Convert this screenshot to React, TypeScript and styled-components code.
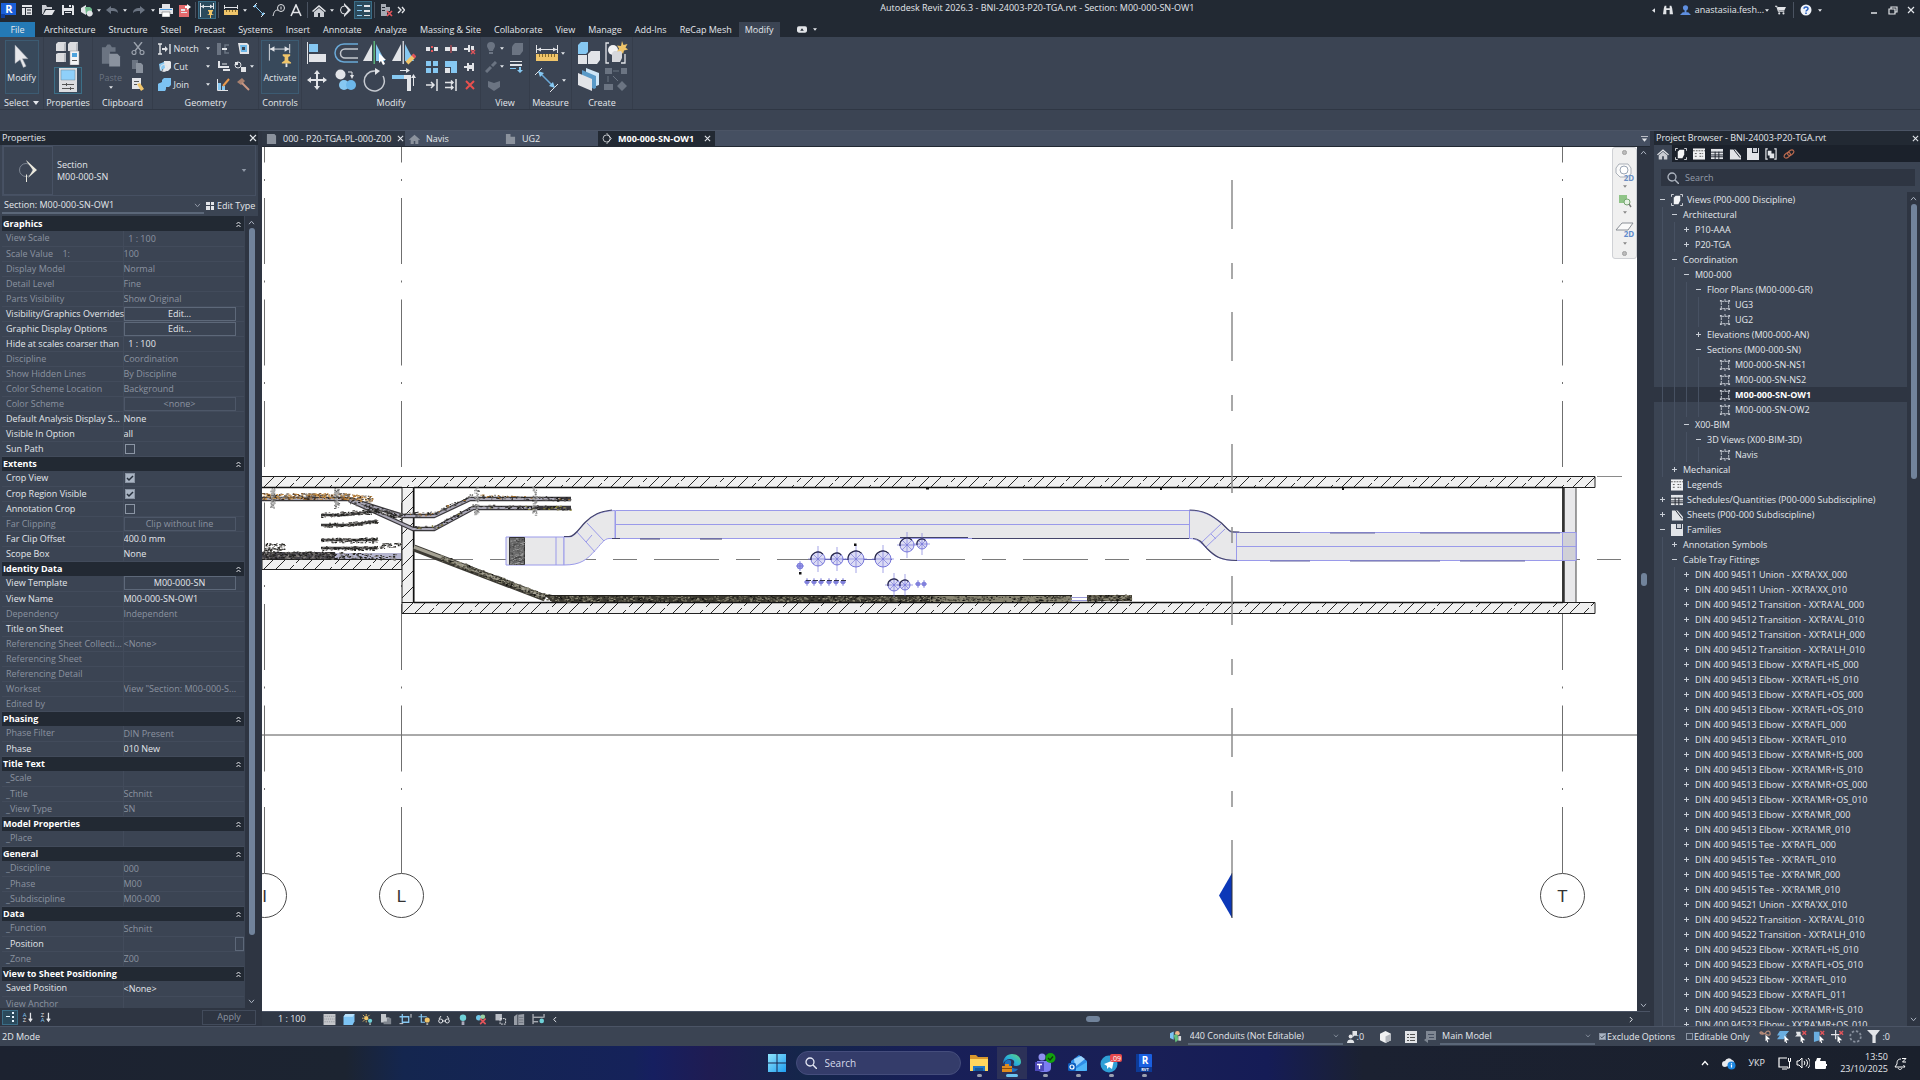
import React from "react";
import styled, { createGlobalStyle, css } from "styled-components";

/* ---------- theme values ---------- */
const c = {
  dark: "#222933",
  darker: "#1b212b",
  panel: "#3b4453",
  well: "#2e3542",
  tab: "#454f61",
  line: "#2f3744",
  text: "#e4e7ec",
  dim: "#8b93a0",
  blue: "#8fd0f5",
  thumb: "#71839b",
};

const GlobalStyle = createGlobalStyle`
  *, *::before, *::after { box-sizing: border-box; }
  body { margin: 0; background: ${c.panel}; overflow: hidden; }
  body, button, input, select { font: 9px/12px "Open Sans", "Noto Sans", sans-serif; color: ${c.text}; }
  button, select, input { margin: 0; padding: 0; border: 0; background: none; outline: 0; }
  svg { display: block; flex: none; }
`;

/* ---------- icons ---------- */
type Drawing = [string, React.ReactNode];
const W = "#e2e4e8";
const G = "#6b7482";
const Y = "#f0c56a";
const R = "#e2545a";
const B = "#86c8f2";
const S = { fill: "none", strokeWidth: 1 } as const;

const art: Record<string, Drawing> = {
  revit: ["0 0 17 17", <><path fill="#1a5fd8" d="M1 1h15v12H5v3H1z" /><path fill="#0f3f9e" d="M1 12h4v4H1z" /><text x="9" y="11" fontSize="11" fontWeight="700" fill="#fff" textAnchor="middle" fontFamily="Open Sans">R</text></>],
  appmenu: ["0 0 12 12", <><path fill={W} d="M1 1h10v2H1zM1 4h3v7H1zM5 4h6v7H5z" /><path stroke={c.dark} {...S} d="M6 6h4M6 9h4" /></>],
  open: ["0 0 14 12", <><path fill="#c9ccd2" d="M1 1h4l1 2h5v2H4L2 10H1z" /><path fill={W} d="M5 6h9l-3 5H2z" /></>],
  save: ["0 0 12 12", <><path fill={W} d="M0 1h11l1 1v9H0z" /><path fill={c.dark} d="M2 1h8v3H2zM2 7h8v4H2z" /><path fill={W} d="M3 8h6v1H3zM7 1h2v2H7z" /></>],
  sync: ["0 0 13 13", <><path fill={W} d="M1 4l5-3v10l-5-3z" /><path fill="#6fb98c" d="M5 3h5l2 2v5H6z" /><path fill={W} d="M8 7a3 3 0 110 5 3 3 0 010-5" /></>],
  undo: ["0 0 14 12", <path fill={G} d="M1 6l5-4v2c5 0 7 2 7 5-2-2-4-2-7-2v3z" />],
  redo: ["0 0 14 12", <path fill={G} d="M13 6L8 2v2C3 4 1 6 1 9c2-2 4-2 7-2v3z" />],
  print: ["0 0 14 13", <><path fill={W} d="M3 0h8v4H3zM0 4h14v6H0z" /><path fill="#4d9be0" d="M1 5h12v1H1z" /><path fill="#fff" stroke="#555" strokeWidth=".5" d="M3 8h8v5H3z" /></>],
  pdf: ["0 0 13 13", <><path fill="#e36a6d" d="M1 1h8l2 3v9H1z" /><path fill={W} d="M3 5h4v2H3zM3 8h6v1H3z" /><path fill="#fff" d="M9 0l4 3-4 3V4H7V2h2z" /></>],
  dimlock: ["0 0 16 16", <><path stroke={W} {...S} d="M1.500 1v14M14.500 1v6M2 4.500h12" /><path fill={W} d="M2 4.500l3-2v4zM14 4.500l-3-2v4z" /><path fill={Y} d="M9 8h5v1l-1 1v2l2 1H8l2-1v-2L9 9zM11 13h1v3h-1z" /></>],
  ruler: ["0 0 14 12", <><path fill={Y} d="M0 6h14v5H0z" /><path stroke="#8a6d2a" {...S} d="M2.500 6v2M5.500 6v2M8.500 6v2M11.500 6v2" /><path stroke={W} {...S} d="M.5 1v4M13.500 1v4M1 3.500h12" /></>],
  dim: ["0 0 14 14", <><path stroke={W} {...S} d="M1 4l4-4M9 14l4-4" /><path stroke={B} {...S} d="M3 3l8 8" /><path fill={B} d="M2 2h3L2 5zM12 12H9l3-3z" /></>],
  tag: ["0 0 13 13", <><circle cx="9" cy="4" r="3.500" stroke={W} {...S} /><path stroke={W} {...S} d="M6 6c-4 0-4 3-5 6M9 2.500v3" /></>],
  lettera: ["0 0 12 13", <path stroke={W} fill="none" strokeWidth="1.600" d="M1 12L6 1l5 11M3 8.500h6" />],
  house: ["0 0 14 13", <><path fill={W} d="M0 7l7-6 7 6-1 1-6-5-6 5z" /><path fill="#c9ccd2" d="M2 8l5-4 5 4v5H8V9H6v4H2z" /></>],
  houseg: ["0 0 14 13", <path fill="#8b929d" d="M0 7l7-6 7 6-1 1-1-1v6H8V9H6v4H2V7L1 8z" />],
  section: ["0 0 12 14", <><circle cx="5.500" cy="7" r="4" stroke={W} {...S} /><path fill={W} d="M5 0l7 7-7 7v-2l4-5-4-5z" /></>],
  thin: ["0 0 14 14", <><path stroke={B} {...S} d="M1 2.500h5M1 7.500h5M1 12.500h5" /><path stroke={W} strokeWidth="2" d="M8 3h6M8 8h6" /><path stroke={W} {...S} d="M8 12.500h6" /></>],
  closeviews: ["0 0 13 14", <><path fill="#a6abb4" d="M1 1h5v3h4v4H7v5H1z" /><path stroke={c.dark} {...S} d="M2 4.500h3M2 7.500h3" /><path stroke={R} strokeWidth="1.700" d="M7 8l5 5M12 8l-5 5" /></>],
  more: ["0 0 8 8", <path stroke={W} fill="none" strokeWidth="1.400" d="M1 1l3 3-3 3M5 1l2.500 3L5 7" />],
  caret: ["0 0 6 4", <path fill="currentColor" d="M0 0h6L3 4z" />],
  caretleft: ["0 0 4 6", <path fill={W} d="M4 0v6L0 3z" />],
  chev: ["0 0 8 6", <path stroke="currentColor" fill="none" strokeWidth="1.200" d="M1 1l3 3.500L7 1" />],
  chevup: ["0 0 8 6", <path stroke="currentColor" fill="none" strokeWidth="1.200" d="M1 5l3-3.500L7 5" />],
  chevleft: ["0 0 6 8", <path stroke="currentColor" fill="none" strokeWidth="1.200" d="M5 1L2 4l3 3" />],
  chevright: ["0 0 6 8", <path stroke="currentColor" fill="none" strokeWidth="1.200" d="M1 1l3 3-3 3" />],
  collapse: ["0 0 5 6", <path stroke={W} {...S} d="M.5 3l2-2 2 2M.5 6l2-2 2 2" />],
  close: ["0 0 8 8", <path stroke="currentColor" fill="none" strokeWidth="1.200" d="M1 1l6 6M7 1L1 7" />],
  min: ["0 0 8 8", <path stroke={W} strokeWidth="1.500" d="M1 7h6" />],
  restore: ["0 0 10 9", <path stroke={W} fill="none" strokeWidth="1.200" d="M3 3V1h6v5H7M1 3h6v5H1z" />],
  binoc: ["0 0 12 12", <path fill={W} d="M1 4l1-3h2v3h4V1h2l1 3 1 7H8V6H4v5H0z" />],
  user: ["0 0 12 12", <><circle cx="6" cy="3" r="2.800" fill="#5f8fe0" /><path fill="#5f8fe0" d="M5 5h2v3h2l3 3H0l3-3h2z" /></>],
  cart: ["0 0 13 11", <><path stroke={W} fill="none" strokeWidth="1.300" d="M0 1h2l2 6h7" /><path fill={W} d="M3 2h10l-2 4H4z" /><circle cx="5" cy="9.500" r="1.200" fill={W} /><circle cx="10" cy="9.500" r="1.200" fill={W} /></>],
  help: ["0 0 12 12", <><circle cx="6" cy="6" r="5.500" fill="#f0f3f8" /><path stroke="#2b62c0" fill="none" strokeWidth="1.500" d="M4 4.800c0-2.400 4-2.400 4 0 0 1.400-2 1.200-2 2.700" /><path fill="#2b62c0" d="M5.200 8.400h1.600V10H5.200z" /></>],
  camera: ["0 0 11 7", <><rect width="11" height="7" rx="2" fill={W} /><path fill={c.dark} d="M5.500 2l2 3h-4z" /></>],
  cursor: ["0 0 16 26", <path fill="#e6e7ea" stroke="#9aa0aa" strokeWidth=".5" d="M1 1l14 15H9l4 8-3 1.500L6.500 17 1 21z" />],
  blocks: ["0 0 26 24", <><path fill="#dcdde0" d="M1 3l2-2h8v9H1zM13 3l2-2h8v9H13zM1 13l2-1h8v9H1z" /><path fill="#b9bcc2" d="M9 3l2-2v9H9zM21 3l2-2v9h-2zM9 13l2-1v9H9z" /><path fill="#f3f4f6" stroke="#888" strokeWidth=".5" d="M15 10h9v14h-9z" /><path fill="#4fa3dc" d="M17 12h5v4h-5z" /><path fill="#555" d="M17 19h5v1h-5z" /></>],
  propsheet: ["0 0 18 24", <><path fill="#dcdde0" d="M0 0h18v24H0z" /><path fill="#8fd0fa" stroke="#6d8496" strokeWidth=".5" d="M2 2h14v10H2z" /><path stroke="#555" {...S} d="M3 16.500h12M3 20.500h12M7.500 15v3M11.500 19v3" /></>],
  paste: ["0 0 22 24", <><path fill={G} d="M1 3h4l2-3h3l2 3h4v5h-6v13H1z" /><path fill="#8a929e" d="M9 10h9l3 3v11H9z" /></>],
  cutter: ["0 0 14 13", <><path stroke="#9aa1ac" fill="none" strokeWidth="1.400" d="M3 0l7 9M11 0L4 9" /><circle cx="3" cy="10.500" r="2" stroke="#9aa1ac" fill="none" strokeWidth="1.200" /><circle cx="11" cy="10.500" r="2" stroke="#9aa1ac" fill="none" strokeWidth="1.200" /></>],
  copyg: ["0 0 12 13", <><path fill={G} d="M0 0h6v9H0z" /><path fill="#8a929e" d="M4 3h5l2 2v8H4z" /></>],
  match: ["0 0 13 13", <><path fill={W} d="M1 0h9v11H1z" /><path stroke="#555" {...S} d="M3 3.500h5M3 6.500h3" /><path fill={Y} d="M6 6l3-1 4 6-3 2z" /></>],
  notch: ["0 0 13 12", <><path stroke={W} fill="none" strokeWidth="1.400" d="M2 1v10M0 1h4M0 11h4M12 1v10" /><path fill={W} d="M4 5h3V3l3 3-3 3V7H4z" /></>],
  cutgeo: ["0 0 13 13", <><path fill="#e8e9ec" d="M6 1h6l1 1v6l-3 3H5z" /><path fill={B} d="M1 4l5-2 1 6-5 3z" /><circle cx="6" cy="8" r="3.500" fill="none" stroke={W} /></>],
  joingeo: ["0 0 13 13", <path fill="#7cc3f4" d="M4 2l2-2h7v7l-2 2H8a5 5 0 11-6-4l2-1z" />],
  cope: ["0 0 13 12", <><path fill={G} d="M0 0h4v12H0z" /><path stroke={G} fill="none" strokeWidth="1.500" d="M12 2H8v8h4" /><path fill={W} d="M5 5h5v2H5z" /></>],
  split: ["0 0 13 12", <><path fill={W} d="M1 0h9l2 2v9H3z" /><path fill="#6fb9ea" d="M3 2h7v7H4z" /><path fill={c.panel} d="M5 4h3v3H5z" /></>],
  wallj: ["0 0 13 12", <><path stroke={W} strokeWidth="2" fill="none" d="M2 0v6h10M6 9h7" /><path stroke={W} {...S} d="M5 3h5" /></>],
  paint: ["0 0 13 12", <><circle cx="4" cy="4" r="3" stroke={W} {...S} /><path fill={W} d="M7 6h5v5H7zM1 1h3v3H1z" /></>],
  demo: ["0 0 13 13", <><path fill={B} d="M1 5h3v7H1zM5 8h3v4H5z" /><path stroke="#ea9a4d" strokeWidth="2" d="M6 8l6-7" /><path stroke={W} {...S} d="M.5 1v11.500H11" /></>],
  hammer: ["0 0 13 13", <><path fill="#a8806f" d="M0 4l5-4 3 3-4 4z" /><path stroke="#c99784" strokeWidth="2" d="M5 5l7 7" /></>],
  activate: ["0 0 26 26", <><path stroke={W} {...S} d="M1.500 0v18M23.500 0v10M2 5.500h21" /><path fill={W} d="M2 5.500l5-3v6zM23 5.500l-5-3v6z" /><path fill={Y} d="M16 11h8v2l-2 1v4l3 2v1H15v-1l3-2v-4l-2-1z" /><path fill={W} d="M19 21h2v4h-2z" /></>],
  align: ["0 0 22 22", <><path fill={W} d="M1 0h1v22H1zM3 12h17v8H3z" /><path fill={B} d="M3 2h9v8H3z" /></>],
  offset: ["0 0 26 22", <><path stroke="#6aa9d8" fill="none" strokeWidth="1.500" d="M25 2H11a9 9 0 000 18h14" /><path stroke="#c3c7ce" fill="none" strokeWidth="1.500" d="M25 7H12a4 4 0 000 9h13" /></>],
  mirrorpick: ["0 0 24 24", <><path fill={W} d="M9 3v17H0z" /><path fill={B} d="M13 3v17h9z" /><path fill="#5bb37a" d="M10.500 0h1.500v23h-1.500z" /><path fill="#fff" d="M16 12l7 7h-3l2 4-2 1-2-4-2 2z" /></>],
  mirrordraw: ["0 0 24 24", <><path fill={W} d="M9 3v17H0z" /><path fill={B} d="M13 3v17h9z" /><path fill="#c9ccd2" d="M10.500 0h1.500v23h-1.500z" /><path stroke={Y} strokeWidth="4" d="M15 22l7-7" /><path stroke={R} strokeWidth="4" d="M21 16l2-2" /></>],
  move: ["0 0 20 20", <path fill={W} d="M10 0l3 4h-2v5h5V7l4 3-4 3v-2h-5v5h2l-3 4-3-4h2v-5H4v2L0 10l4-3v2h5V4H7z" />],
  copy: ["0 0 22 22", <><circle cx="5.500" cy="5.500" r="5" fill={W} /><circle cx="9" cy="16" r="5" fill={B} /><circle cx="16" cy="16" r="5" fill="#6cb7ea" /><path stroke={W} fill="none" d="M13 3h4v4" /><path fill={W} d="M15 6h4l-2 4z" /></>],
  rotate: ["0 0 24 24", <><path stroke="#c6cad1" fill="none" strokeWidth="1.500" d="M20 8a10 10 0 11-8-5" /><path fill={W} d="M12 0l5 3-5 4z" /></>],
  trim: ["0 0 24 24", <><path stroke={B} strokeWidth="4" d="M0 9h12" /><path stroke={W} fill="none" strokeWidth="4" d="M12 9h5v14" /><path stroke={W} {...S} d="M8 2.500h8M21.500 18V9" /><path fill={W} d="M14 0l4 2.500-4 2.500zM19 10l2.500-4 2.500 4z" /></>],
  splitel: ["0 0 12 10", <><path fill={W} d="M0 3h4v4H0zM8 3h4v4H8z" /><path fill={R} d="M5 2h2v2H5zM5 6h2v2H5z" /></>],
  splitgap: ["0 0 12 10", <><path fill={W} d="M0 3h5v4H0zM7 3h5v4H7z" /><path stroke={R} {...S} d="M6 1v8" /></>],
  unpin: ["0 0 12 12", <><path fill={W} d="M0 5h4V2h2v7H4V7H0zM7 3h3v4H7z" /><path stroke={R} strokeWidth="1.400" d="M7 7l4 4M11 7l-4 4" /></>],
  array: ["0 0 12 12", <path fill={B} d="M0 0h5v5H0zM7 0h5v5H7zM0 7h5v5H0zM7 7h5v5H7z" />],
  scale: ["0 0 12 12", <><path fill={B} d="M0 0h12v12H6V6H0z" /><path fill={W} d="M0 7h5v5H0z" /></>],
  pin: ["0 0 12 12", <path fill={W} d="M0 5h3V2h2v2h3V2h2v8H8V8H5v2H3V7H0z" />],
  trims: ["0 0 13 12", <path stroke={W} fill="none" strokeWidth="1.500" d="M0 6h8M5 3l3 3-3 3M11 0v12" />],
  trimm: ["0 0 13 12", <path stroke={W} fill="none" strokeWidth="1.500" d="M0 3.500h8M0 8.500h8M6 1.500l2 2-2 2M6 6.500l2 2-2 2M11 0v12" />],
  del: ["0 0 10 10", <path stroke="#e8504e" fill="none" strokeWidth="2" d="M1 1l8 8M9 1L1 9" />],
  bulbg: ["0 0 12 13", <path fill={G} d="M6 0a4 4 0 014 4c0 2-2 3-2 5H4c0-2-2-3-2-5a4 4 0 014-4zM4 10h4v2H4z" />],
  cubeg: ["0 0 13 12", <path fill={G} d="M3 2l2-2h8v8l-3 4H2V4z" />],
  brushg: ["0 0 12 12", <path stroke={G} strokeWidth="3" d="M1 11l5-5M7 5l4-4" />],
  linew: ["0 0 13 12", <><path fill={W} d="M0 0h12v1H0zM0 3h12v2H0z" /><path fill={B} d="M0 7h6v1H0zM9 6h2v3H9zM7 9h6l-3 3z" /></>],
  diamondg: ["0 0 12 12", <path fill={G} d="M0 2l6 2 6-2v6l-6 4-6-4z" />],
  measure: ["0 0 22 16", <><path fill={Y} d="M0 9h22v7H0z" /><path stroke="#8a6d2a" {...S} d="M3.500 9v3M6.500 9v3M9.500 9v3M12.500 9v3M15.500 9v3M18.500 9v3" /><path stroke={W} {...S} d="M.5 0v8M21.500 0v8M1 4.500h20" /><path fill={W} d="M1 4.500l4-2v4zM21 4.500l-4-2v4z" /></>],
  dimbig: ["0 0 24 24", <><path stroke={W} {...S} d="M0 7l7-7M15 24l8-8" /><path stroke="#6aa9d8" fill="none" strokeWidth="1.500" d="M4 4l15 15" /><path fill={B} d="M3 3l6 2-4 4zM20 20l-6-2 4-4z" /></>],
  family: ["0 0 24 22", <><path fill={B} d="M1 3l3-3h7v10l-2 2H1z" /><path fill={W} d="M1 13h9v9H1zM11 12l3-3h9v9l-3 4h-9z" /></>],
  group: ["0 0 24 24", <><path stroke={W} fill="none" strokeWidth="1.300" d="M5 2H2v20h3M17 22h4v-9" /><circle cx="9" cy="9" r="5" fill="#f1f1f3" /><path fill="#d6d7db" d="M8 12l2-2h8v7l-2 4H8z" /><path fill={Y} d="M18 0l1.500 4 4-1-2 3.500 2.500 2-4 1-1 3.500-2-3-4 .500 2-3-2-3 4 .5z" /></>],
  sheets: ["0 0 24 24", <><path fill="#cfe6f7" d="M9 0l13 5v12l-3 1L9 12z" /><path fill="#5a9ac8" d="M5 2l14 6v12l-2 1L5 14z" /><path fill={W} d="M1 5l14 6v12L1 17z" /></>],
  assembly: ["0 0 24 24", <><path fill={G} d="M1 0h7v6H1zM17 0h6v6h-6zM0 16h9v6H0zM18 13l5 5-5 5-5-5z" /><path stroke={G} {...S} d="M9 3h6M4 8v6M9 8l5 5" /></>],
  sheet: ["0 0 13 12", <path fill="#8b929d" d="M1 0h9l2 2v10H1z" />],
  plan: ["0 0 12 12", <path fill="#8b929d" d="M1 1h5v3h5v8H1z" />],
  tabsec: ["0 0 12 14", <><circle cx="5.500" cy="7" r="4.500" stroke={W} {...S} /><path stroke={W} {...S} d="M5.500 0l6 7-6 7" /></>],
  grid: ["0 0 8 8", <path fill={W} d="M0 0h4v3H0zM5 0h3v3H5zM0 4h4v4H0zM5 4h3v4H5z" />],
  typesec: ["0 0 20 24", <><circle cx="8" cy="11" r="6.500" fill="none" stroke="#8d95a1" strokeWidth=".8" /><path fill="#eceade" d="M8 1l11 10-9 8 5-8-6-8zM8 15v8h1v-7z" /></>],
  sortcat: ["0 0 14 14", <path fill="#e8f6ff" d="M9 2h2v2H9zM9 6h2v2H9zM9 10h2v2H9zM3 6h4v1H3z" />],
  sortaz: ["0 0 13 14", <><text x="3" y="7" fontSize="7" fill={B} textAnchor="middle">A</text><text x="3" y="13" fontSize="7" fill={W} textAnchor="middle">Z</text><path stroke={W} strokeWidth="1.500" d="M10 2v9M8 9l2 3 2-3" fill="none" /></>],
  sortza: ["0 0 13 14", <><text x="3" y="7" fontSize="7" fill={W} textAnchor="middle">Z</text><text x="3" y="13" fontSize="7" fill={B} textAnchor="middle">A</text><path stroke={W} strokeWidth="1.500" d="M10 2v9M8 9l2 3 2-3" fill="none" /></>],
  views: ["0 0 13 13", <><path stroke={W} {...S} d="M.5 3V.5H3M10 .5h2.500V3M12.500 10v2.500H10M3 12.500H.5V10" /><path fill="#f3f4f6" d="M3 4l2-2h5v5l-2 4H3z" /></>],
  legend: ["0 0 13 12", <><path fill="#f0f1f3" d="M0 0h13v12H0z" /><path stroke="#555" {...S} d="M0 2.500h13M2 5.500h3M2 8.500h3M7 5.500h4M7 8.500h4" strokeDasharray="2 1" /></>],
  sched: ["0 0 13 11", <><path fill={W} d="M0 0h13v11H0z" /><path stroke={c.darker} {...S} d="M0 3.500h13M0 6.500h13M0 8.500h13M4.500 3v8M8.500 3v8" /></>],
  sheetp: ["0 0 13 12", <><path fill={W} d="M1 1h6l6 7v4H1z" /><path stroke={c.darker} {...S} d="M5 1l7 9" /></>],
  fam: ["0 0 12 12", <><path fill={W} d="M0 0h5v5h6V0h1v12H0z" /><path fill="#c9ccd2" d="M6 0h4v4H6z" /></>],
  grp: ["0 0 13 13", <><path stroke={W} fill="none" strokeWidth="1.300" d="M3 1H1v11h2M10 1h2v11h-2" /><path fill={W} d="M3 3h4v3h3v5H5V8H3z" /></>],
  link: ["0 0 14 12", <><ellipse cx="5" cy="7.500" rx="4" ry="2.500" transform="rotate(-35 5 7.500)" stroke="#b9694e" fill="none" strokeWidth="1.400" /><ellipse cx="9" cy="4.500" rx="4" ry="2.500" transform="rotate(-35 9 4.500)" stroke="#b9694e" fill="none" strokeWidth="1.400" /></>],
  crop: ["0 0 13 13", <><path stroke="#c7ccd4" {...S} strokeDasharray="3 1" d="M2.500 2.500h8v8h-8z" /><path fill="#c7ccd4" d="M1 1h2v2H1zM10 1h2v2h-2zM1 10h2v2H1zM10 10h2v2h-2zM6 0h1v3H6zM6 10h1v3H6z" /></>],
  search: ["0 0 12 12", <><circle cx="5" cy="5" r="4" stroke="currentColor" fill="none" strokeWidth="1.300" /><path stroke="currentColor" strokeWidth="1.400" d="M8 8l4 4" /></>],
  plus: ["0 0 7 7", <path stroke="#c9ced6" strokeWidth="1" d="M1 3.500h5M3.500 1v5" />],
  minus: ["0 0 7 7", <path stroke="#c9ced6" strokeWidth="1" d="M1 3.500h5" />],
  wheel: ["0 0 20 20", <><path fill="#fafafa" stroke="#aab0b8" d="M4 2h9l3 4v6l-4 3H5l-4-4V6z" /><circle cx="9" cy="8" r="4" fill="#fff" stroke="#9aa5b4" /><text x="14" y="19" fontSize="8" fontWeight="700" fill="#6b8fc4" textAnchor="middle" fontFamily="Open Sans">2D</text></>],
  zoomr: ["0 0 14 14", <><path fill="#8fc487" d="M1 1h8v8H1z" /><circle cx="9" cy="8" r="3" fill="#e7f3e5" stroke="#76a571" /><path stroke="#777" strokeWidth="1.400" d="M11 10l2 3" /></>],
  plane: ["0 0 20 18", <><path fill="#fafafa" stroke="#8a8f96" d="M1 9L7 2h11l-5 7z" /><text x="14" y="16" fontSize="8" fontWeight="700" fill="#5f8bcc" textAnchor="middle" fontFamily="Open Sans">2D</text></>],
  dot: ["0 0 6 6", <circle cx="3" cy="3" r="2.500" fill="#bbb" stroke="#999" />],
  detail: ["0 0 13 12", <><path fill="#c4c6ca" d="M0 0h13v12H0z" /><path stroke="#8b8f96" {...S} strokeDasharray="1 1" d="M0 2.500h13M1 5.500h12M0 8.500h13" /></>],
  style: ["0 0 12 12", <><path fill="#7cc3f4" d="M0 3l2-3h10v8l-2 4H0z" /><path fill="#b8e0fa" d="M0 3l2-3h10l-2 3z" /></>],
  sun: ["0 0 13 13", <><circle cx="5" cy="5" r="2.500" fill={Y} /><path stroke={Y} {...S} d="M5 0v2M0 5h2M1 1l2 2M5 8v2M9 1L7 3M1 9l2-2" /><circle cx="9.500" cy="8" r="2.500" fill="#6fd1d8" /><path fill="#9aa" d="M8.500 11h2v2h-2z" /></>],
  shadow: ["0 0 13 13", <><path fill="#c3c6cb" d="M0 0h6v4h4v6H0z" /><path fill="#7f858e" d="M3 9h4V5h5v7H3z" /></>],
  cropv: ["0 0 13 12", <><path stroke={B} fill="none" strokeWidth="1.400" d="M3 0v9h7V3H0" /><path stroke={W} {...S} d="M0 10.500h4M12.500 0v4" /></>],
  cropb: ["0 0 13 12", <><path stroke={B} fill="none" strokeWidth="1.300" d="M3 0v9h4M0 3h9" /><circle cx="9.500" cy="6.500" r="2.800" fill={Y} /><path fill="#aaa" d="M8.500 10h2v2h-2z" /></>],
  glasses: ["0 0 12 9", <><circle cx="2.700" cy="6" r="2" stroke={W} {...S} /><circle cx="9.300" cy="6" r="2" stroke={W} {...S} /><path stroke={W} {...S} d="M5 6h2M1 4l2-3M11 4L9 1" /></>],
  bulb: ["0 0 8 12", <><circle cx="4" cy="4" r="3.500" fill="#6fd1d8" /><path fill="#aab" d="M2.500 8h3v4h-3z" /></>],
  props: ["0 0 13 12", <><circle cx="3.500" cy="4" r="3" fill="#6fc6e8" /><circle cx="8" cy="3" r="2.500" fill="#9ad0a0" /><path stroke={R} strokeWidth="1.800" d="M5 5l6 6M11 5l-6 6" /></>],
  analytic: ["0 0 12 12", <><path fill="#b9bdc5" d="M0 0h7v7H0z" /><path stroke={W} {...S} strokeDasharray="2 1" d="M5 5h6v6H5z" /></>],
  building: ["0 0 13 13", <><path fill="#989da6" d="M0 3l4-3v13H0zM5 1l7-1v13H5z" /><path stroke="#6c727c" {...S} d="M6 4h5M6 7h5M6 10h5" /></>],
  constr: ["0 0 14 12", <><path stroke={W} {...S} d="M.5 0v11M12.500 0v4M1 3.500h11M1 8.500h5" /><circle cx="10" cy="7.500" r="2.500" fill="#6fd1d8" /></>],
  workset: ["0 0 13 13", <><path fill="#7cc3f4" d="M0 3l4-2v9l-4-2z" /><circle cx="8" cy="3" r="2.500" fill="#efb48a" /><path fill="#63c07c" d="M4 5l4-1 1 6-3 3z" /><path fill="#d8dade" d="M9 6h3v5H9z" /></>],
  editreq: ["0 0 11 13", <><path fill={W} d="M6 0h5v5H8L6 7z" /><circle cx="4" cy="6" r="2.200" fill={W} /><path fill={W} d="M0 13c0-5 8-5 8 0z" /></>],
  cube: ["0 0 12 13", <><path fill="#f0f1f3" d="M0 3l6-3 6 3v7l-6 3-6-3z" /><path fill="#b3b7be" d="M6 6l6-3v7l-6 3z" /></>],
  listw: ["0 0 12 12", <><path fill={W} d="M0 0h12v12H0z" /><path stroke="#555" {...S} d="M2 3.500h2M5 3.500h5M2 6.500h2M5 6.500h5M2 9.500h2M5 9.500h5" /></>],
  listg: ["0 0 12 12", <><path fill="#7f8793" d="M2 0h10v9H2zM0 9l4-3v6z" /><path stroke="#454f61" {...S} d="M4 3.500h6M5 6.500h5" /></>],
  sellink: ["0 0 14 14", <><path stroke="#b58a78" fill="none" strokeWidth="1.400" d="M1 3c2-3 4 3 6 0s5-2 5 1-4 1-5 0-5 2-6-1z" /><path fill="#fff" d="M7 5l5 5H9l1 3-1 .5L8 11l-1 1z" /></>],
  selund: ["0 0 14 14", <><path fill="#6aaee0" d="M3 1h10L9 6H0zM3 6h8l-4 4H0z" /><path fill="#fff" d="M8 6l5 5h-3l1 3-1 .5L9 12l-1 1z" /></>],
  selpin: ["0 0 14 14", <><path fill={W} d="M1 2h5v3l2 2H0l2-2z" /><path stroke={R} strokeWidth="1.500" d="M8 1l4 4M12 1L8 5" /><path fill="#fff" d="M6 6l5 5H8l1 3-1 .5L7 12l-1 1z" /></>],
  selface: ["0 0 14 14", <><path fill="#6aaee0" d="M1 2h6v9l-6 2z" /><path stroke={R} strokeWidth="1.500" d="M8 1l4 4M12 1L8 5" /><path fill="#fff" d="M7 6l5 5H9l1 3-1 .5L8 12l-1 1z" /></>],
  seldrag: ["0 0 14 14", <><path stroke={W} strokeWidth="1.300" d="M5 0v10M0 5h9" /><path stroke={R} strokeWidth="1.500" d="M9 1l4 4M13 1L9 5" /><path fill="#fff" d="M7 6l5 5H9l1 3-1 .5L8 12l-1 1z" /></>],
  spin: ["0 0 11 11", <circle cx="5.500" cy="5.500" r="4.500" stroke="#878f9c" fill="none" strokeWidth="1.500" strokeDasharray="2 1.500" />],
  filter: ["0 0 12 12", <path fill={W} d="M0 0h12L8 5v7H5V5z" />],
  win: ["0 0 18 18", <><defs><linearGradient id="wg" x1="0" y1="0" x2="1" y2="1"><stop stopColor="#8fe3fb" /><stop offset="1" stopColor="#1f9ef0" /></linearGradient></defs><path fill="url(#wg)" d="M0 0h8.500v8.500H0zM9.500 0H18v8.500H9.500zM0 9.500h8.500V18H0zM9.500 9.500H18V18H9.500z" /></>],
  folder: ["0 0 20 18", <><path fill="#d9972c" d="M1 1h6l2 2h10v4H1z" /><path fill="#ffd75e" d="M1 5h18v12H1z" /><path fill="#1f78c8" d="M4 12h12v5H4z" /><path fill="#155a9c" d="M6 14h8v3H6z" /></>],
  edge: ["0 0 20 20", <><defs><linearGradient id="eg" x1="0" y1="1" x2="1" y2="0"><stop stopColor="#1560b8" /><stop offset=".5" stopColor="#2bb3d8" /><stop offset="1" stopColor="#64d66e" /></linearGradient></defs><path fill="url(#eg)" d="M1 11C1 5 5 1 10 1c6 0 9 4 9 8 0 3-3 4-5 4s-3-1-2-3-1-4-4-4-6 2-7 5z" /><path fill="#1b6fc4" d="M3 9c2-3 7-3 6 1-1 3 1 6 7 6-2 3-6 4-9 2-4-2-5-6-4-9z" /><path fill="#e08a1e" d="M0 13h10v6H0zM3 11h4v2H3z" /><path fill="#8a4f10" d="M0 15h10v1H0z" /></>],
  teams: ["0 0 22 20", <><circle cx="8" cy="4" r="3.500" fill="#8d8ff0" /><path fill="#7b7df0" d="M3 8h14v7c0 3-3 4-5 4H8c-3 0-5-3-5-5z" /><path fill="#4b48b8" d="M1 9h9v9H1z" /><path stroke="#fff" strokeWidth="1.300" d="M3 11.500h5M5.500 11.500V16" /><circle cx="16.500" cy="5" r="5" fill="#13a10e" /><path stroke="#0b3d0a" fill="none" strokeWidth="1.300" d="M14 5l2 2 3-3.500" /></>],
  outlook: ["0 0 20 18", <><path fill="#2f8ee8" d="M3 7l8-6 8 6v10H3z" /><path fill="#9bd4ff" d="M6 5l7-3 4 3-10 8z" /><path fill="#4fb4f8" d="M4 17l15-9v8l-2 1z" /><rect y="9" width="8" height="8" rx="1.500" fill="#0f5fc0" /><circle cx="4" cy="13" r="2" stroke="#fff" fill="none" strokeWidth="1.200" /></>],
  telegram: ["0 0 22 20", <><circle cx="9" cy="11" r="8.500" fill="#2f9fd6" /><path fill="#fff" d="M4 11l10-4-2 9-3-2-2 2v-3z" /><rect x="10" y="1" width="12" height="8" rx="2" fill="#e5484d" /><text x="16" y="8" fontSize="7" fill="#fff" textAnchor="middle" fontFamily="Open Sans">.09</text></>],
  rvt: ["0 0 18 20", <><rect x="1" y="1" width="16" height="18" rx="1" fill="#1a5fe0" /><path fill="#0d3a96" d="M1 1h3v18H1zM4 14h13v5H4z" /><text x="10" y="11" fontSize="10" fontWeight="700" fill="#fff" textAnchor="middle" fontFamily="Open Sans">R</text><text x="10" y="18" fontSize="4" fontWeight="700" fill="#fff" textAnchor="middle" fontFamily="Open Sans">RVT</text></>],
  cloud: ["0 0 14 13", <><path fill="#e8eaee" d="M3 10a3 3 0 010-6 4 4 0 017-1 3 3 0 012 4z" /><circle cx="9.500" cy="8.500" r="4" fill="#1c86e0" /><path stroke="#fff" strokeWidth="1.200" d="M9.500 7.500v3M9.500 6v.8" /></>],
  monitor: ["0 0 14 13", <><path stroke="#fff" fill="none" strokeWidth="1.200" d="M9 1H1v9h9M4 12h5" /><path stroke="#fff" {...S} d="M10.500 1v3.500h2V1M11.500 5v6H9" /></>],
  sound: ["0 0 14 12", <><path stroke="#fff" {...S} d="M1 4h2l3-3v10L3 8H1zM8 4c1 1 1 3 0 4M10 2.500c2 2 2 5 0 7M12 1c3 3 3 7 0 10" /></>],
  battery: ["0 0 14 11", <><path fill="#fff" d="M2 4h9v6H2zM12 6h1v2h-1z" /><path stroke="#fff" {...S} d="M1.500 3.500h10v7h-10z" /><path fill="#fff" d="M3 0h4l-1 3H2z" /></>],
  bell: ["0 0 13 13", <><path stroke="#fff" {...S} d="M7 2C3 2 3 5 3 7L1 10h10L9.500 8M4 11c1 2 3 2 4 0M8 1.500h4L8.500 5H12" /></>],
  arrowsort: ["0 0 9 7", <><path fill={W} d="M0 0h9v1H0zM1 3h7L4.500 7z" /></>],
};

const Icon = ({ n, w, h, color }: { n: string; w?: number; h?: number; color?: string }) => {
  const [vb, body] = art[n];
  const [, , vw, vh] = vb.split(" ").map(Number);
  return (
    <svg width={w ?? vw} height={h ?? vh} viewBox={vb} color={color} aria-hidden="true">
      {body}
    </svg>
  );
};

/* ---------- frame ---------- */
const Shell = styled.div`
  height: 100vh;
  display: grid;
  grid-template-rows: 22px 15px 73px 20px minmax(0, 1fr) 20px 34px;
  background: ${c.panel};
  overflow: hidden;
  white-space: nowrap;
`;

const Bar = styled.div`
  display: flex;
  align-items: center;
`;

const TitleBar = styled.header`
  display: flex;
  background: ${c.dark};
  padding-bottom: 2px;
`;

const TitleText = styled.span`
  flex: 1;
  padding: 2px 0 0 20px;
  text-align: center;
`;

const ToolBtn = styled.button<{ $w: number; $on?: boolean; $h?: number }>`
  flex: none;
  width: ${(p) => p.$w}px;
  height: ${(p) => p.$h ?? 18}px;
  display: flex;
  align-items: center;
  justify-content: center;
  ${(p) => p.$on && css`background: #2b4a5c; box-shadow: inset 0 0 0 1px #3a6d87;`}
`;

const Rule = styled.span`
  width: 1px;
  height: 16px;
  margin: 0 2px;
  background: #4a5361;
`;

const quick: [string, number, boolean?][] = [
  ["revit", 17], ["appmenu", 20], ["open", 22], ["save", 18], ["sync", 18], ["caret", 8], ["undo", 18], ["caret", 8],
  ["redo", 20], ["caret", 8], ["print", 18], ["pdf", 18], ["|", 0], ["dimlock", 18, true], ["|", 0], ["ruler", 20], ["caret", 8],
  ["dim", 20], ["tag", 18], ["lettera", 18], ["|", 0], ["house", 18], ["caret", 8], ["section", 18], ["thin", 18, true], ["|", 0],
  ["closeviews", 18], ["more", 12],
];

/* ---------- ribbon ---------- */
const TabRow = styled.nav`
  display: flex;
  gap: 1px;
  background: ${c.dark};
`;

const RibbonTab = styled.button<{ $kind?: "file" | "on" }>`
  padding: 0 6px;
  line-height: 15px;
  ${(p) => p.$kind === "file" && css`background: #2479b5; width: 35px; margin-right: 2px;`}
  ${(p) => p.$kind === "on" && css`background: ${c.panel};`}
`;

const Ribbon = styled.div`
  display: flex;
  background: ${c.panel};
  border-bottom: 1px solid ${c.line};
`;

const Panel = styled.section<{ $w: number }>`
  width: ${(p) => p.$w}px;
  display: grid;
  grid-template-rows: 59px 13px;
  border-right: 1px solid #353d4b;
  justify-items: center;
`;

const PanelBody = styled.div<{ $gap?: number }>`
  display: flex;
  align-items: center;
  justify-content: center;
  gap: ${(p) => p.$gap ?? 4}px;
`;

const PanelName = styled.span`
  display: flex;
  align-items: center;
  gap: 4px;
  line-height: 13px;
`;

const BigBtn = styled.button<{ $w: number; $on?: boolean; $off?: boolean }>`
  width: ${(p) => p.$w}px;
  height: 54px;
  display: grid;
  grid-template-rows: 32px 12px 8px;
  justify-items: center;
  align-items: center;
  ${(p) => p.$on && css`background: #35536a66; box-shadow: inset 0 0 0 1px #3c5b72;`}
  ${(p) => p.$off && css`color: ${c.dim}99;`}
`;

const IconGrid = styled.div<{ $cols: number; $w: number; $h: number }>`
  display: grid;
  grid-template-columns: repeat(${(p) => p.$cols}, ${(p) => p.$w}px);
  grid-auto-rows: ${(p) => p.$h}px;
`;

const GridBtn = styled.button<{ $on?: boolean }>`
  display: flex;
  align-items: center;
  justify-content: center;
  gap: 3px;
  ${(p) => p.$on && css`background: #35536a66; box-shadow: inset 0 0 0 1px #3c7088;`}
`;

const TextBtn = styled.button`
  display: grid;
  grid-template-columns: 16px 32px 8px;
  align-items: center;
  justify-items: start;
  height: 18px;
`;

const Stack = styled.div`
  display: grid;
`;

const Icons = ({ names, cols, w, h, on }: { names: string[]; cols: number; w: number; h: number; on?: string }) => (
  <IconGrid $cols={cols} $w={w} $h={h}>
    {names.map((n, i) => {
      const [a, b] = n.split("+");
      return (
        <GridBtn key={i} $on={a === on} aria-label={a || "empty"} disabled={!a}>
          {a && <Icon n={a} />}
          {b && <Icon n={b} w={4} h={3} />}
        </GridBtn>
      );
    })}
  </IconGrid>
);

/* ---------- docked area ---------- */
const Dock = styled.main`
  display: grid;
  grid-template-columns: 258px minmax(0, 1fr) 266px;
  column-gap: 4px;
  min-height: 0;
  background: ${c.well};
  border-top: 1px solid #4b5465;
`;

const Side = styled.aside`
  display: flex;
  flex-direction: column;
  min-height: 0;
  background: ${c.panel};
`;

const SideHead = styled.header`
  flex: none;
  height: 14px;
  padding: 0 0 0 2px;
  display: flex;
  align-items: center;
  justify-content: space-between;
  background: ${c.dark};
`;

const TypePicker = styled.button`
  flex: none;
  height: 51px;
  margin: 0 2px;
  display: grid;
  grid-template-columns: 50px 1fr 14px;
  column-gap: 4px;
  align-items: center;
  text-align: left;
  border: 1px solid #465062;
`;

const Thumb = styled.span`
  height: 49px;
  display: grid;
  place-items: center;
  border: 1px solid #485264;
`;

const Instance = styled.div`
  flex: none;
  height: 20px;
  padding: 2px 4px 2px 2px;
  display: grid;
  grid-template-columns: 202px 1fr;
  column-gap: 2px;
`;

const Combo = styled.label<{ $w?: number }>`
  display: grid;
  grid-template-columns: 1fr 10px;
  align-items: center;
  width: ${(p) => (p.$w ? p.$w + "px" : "auto")};
  height: 16px;
  border-bottom: 2px solid #5b6779;
  select {
    grid-area: 1 / 1 / 2 / 3;
    appearance: none;
    height: 14px;
    padding: 0 10px 0 2px;
  }
  svg { grid-area: 1 / 2; pointer-events: none; }
`;

const EditType = styled.button`
  display: flex;
  align-items: center;
  gap: 3px;
  height: 15px;
`;

const Scroller = styled.div`
  flex: 1;
  min-height: 0;
  display: grid;
  grid-template-columns: minmax(0, 1fr) 13px;
  overflow: hidden;
`;

const Clip = styled.div`
  min-height: 0;
  overflow: hidden;
`;

const PropTable = styled.table`
  width: 242px;
  margin-left: 2px;
  border-collapse: collapse;
  table-layout: fixed;
  th, td { height: 15px; padding: 0; line-height: 14px; text-align: left; font-weight: 400; border-bottom: 1px solid #424b5b; }
  th { padding-left: 4px; border-right: 1px solid #424b5b; }
`;

const GroupRow = styled.tr`
  && th {
    padding: 0 3px 0 1px;
    background: ${c.dark};
    border: 0;
    font-weight: 700;
    color: #fff;
  }
  div { display: flex; justify-content: space-between; align-items: center; }
`;

const PropRow = styled.tr<{ $off?: boolean }>`
  color: ${(p) => (p.$off ? c.dim : c.text)};
`;

const CellBtn = styled.button<{ $off?: boolean }>`
  display: block;
  width: 112px;
  height: 14px;
  line-height: 12px;
  border: 1px solid ${(p) => (p.$off ? "#4d5768" : "#5d6879")};
  color: ${(p) => (p.$off ? c.dim : c.text)};
`;

const SmallBtn = styled(CellBtn)`
  width: 9px;
  margin-left: auto;
`;

const CellInput = styled.input`
  display: block;
  width: 100%;
  height: 14px;
  color: inherit;
`;

const Check = styled.input.attrs({ type: "checkbox" })<{ $s?: number }>`
  appearance: none;
  display: block;
  width: ${(p) => p.$s ?? 10}px;
  height: ${(p) => p.$s ?? 10}px;
  margin: 0 0 0 1px;
  border: 1px solid #8a94a3;
  &:checked { background: #a9b4c3; }
`;

const CheckCell = styled.label<{ $w?: number }>`
  display: grid;
  width: ${(p) => p.$w ?? 12}px;
  align-items: center;
  svg { grid-area: 1 / 1; margin-left: 2px; pointer-events: none; z-index: 1; }
  input { grid-area: 1 / 1; }
`;

const CheckMark = ({ s }: { s: number }) => (
  <svg width={s} height={s} viewBox="0 0 8 8"><path d="M1 4l2 2 4-4" stroke="#27303d" fill="none" strokeWidth="1.500" /></svg>
);

const Track = styled.div`
  display: flex;
  flex-direction: column;
  align-items: center;
  justify-content: space-between;
  background: ${c.well};
  padding: 4px 0;
  color: #aab2bf;
`;

const Rail = styled.div<{ $from: number; $len: number }>`
  flex: 1;
  width: 6px;
  margin: 3px 0;
  display: grid;
  grid-template-rows: ${(p) => p.$from}fr ${(p) => p.$len}fr ${(p) => 100 - p.$from - p.$len}fr;
  &::after { content: ""; grid-row: 2; border-radius: 3px; background: ${c.thumb}; }
`;

const SideFoot = styled.footer`
  flex: none;
  height: 18px;
  padding: 1px 2px;
  display: flex;
  align-items: center;
  background: ${c.well};
`;

const Apply = styled.button`
  margin-left: auto;
  width: 54px;
  height: 15px;
  color: ${c.dim};
  border: 1px solid #424b5b;
`;

type Prop = [string, string?, string?]; // label, value, flags: d=disabled b=button c=check C=checked
const props: (string | Prop)[] = [
  "Graphics",
  ["View Scale", "\u00a0 1 : 100", "d"], ["Scale Value\u00a0\u00a0\u00a0 1:", "100", "d"], ["Display Model", "Normal", "d"], ["Detail Level", "Fine", "d"],
  ["Parts Visibility", "Show Original", "d"], ["Visibility/Graphics Overrides", "Edit...", "b"], ["Graphic Display Options", "Edit...", "b"],
  ["Hide at scales coarser than", "\u00a0 1 : 100"], ["Discipline", "Coordination", "d"], ["Show Hidden Lines", "By Discipline", "d"],
  ["Color Scheme Location", "Background", "d"], ["Color Scheme", "<none>", "db"], ["Default Analysis Display S...", "None"],
  ["Visible In Option", "all"], ["Sun Path", "", "c"],
  "Extents",
  ["Crop View", "", "C"], ["Crop Region Visible", "", "C"], ["Annotation Crop", "", "c"], ["Far Clipping", "Clip without line", "db"],
  ["Far Clip Offset", "400.0 mm"], ["Scope Box", "None"],
  "Identity Data",
  ["View Template", "M00-000-SN", "b"], ["View Name", "M00-000-SN-OW1"], ["Dependency", "Independent", "d"], ["Title on Sheet", ""],
  ["Referencing Sheet Collecti...", "<None>", "d"], ["Referencing Sheet", "", "d"], ["Referencing Detail", "", "d"],
  ["Workset", "View \"Section: M00-000-S...", "d"], ["Edited by", "", "d"],
  "Phasing",
  ["Phase Filter", "DIN Present", "d"], ["Phase", "010 New"],
  "Title Text",
  ["_Scale", "", "d"], ["_Title", "Schnitt", "d"], ["_View Type", "SN", "d"],
  "Model Properties",
  ["_Place", "", "d"],
  "General",
  ["_Discipline", "000", "d"], ["_Phase", "M00", "d"], ["_Subdiscipline", "M00-000", "d"],
  "Data",
  ["_Function", "Schnitt", "d"], ["_Position", "", "s"], ["_Zone", "Z00", "d"],
  "View to Sheet Positioning",
  ["Saved Position", "<None>"], ["View Anchor", "", "d"],
];

const PropLine = ({ p: [label, value = "", f = ""] }: { p: Prop }) => {
  const off = f.includes("d");
  let cell: React.ReactNode = <CellInput aria-label={label} defaultValue={value} disabled={off} />;
  if (f.includes("b")) cell = <CellBtn $off={off}>{value}</CellBtn>;
  else if (f === "s") cell = <SmallBtn aria-label={label} />;
  else if (f === "c" || f === "C")
    cell = (
      <CheckCell>
        <Check aria-label={label} defaultChecked={f === "C"} />
        {f === "C" && <CheckMark s={8} />}
      </CheckCell>
    );
  return (
    <PropRow $off={off}>
      <th scope="row">{label}</th>
      <td>{cell}</td>
    </PropRow>
  );
};

/* ---------- centre ---------- */
const Centre = styled.div`
  display: grid;
  grid-template-rows: 16px minmax(0, 1fr) 15px;
  grid-template-columns: minmax(0, 1fr) 13px;
  min-height: 0;
`;

const ViewTabs = styled.div`
  grid-column: 1 / 3;
  display: flex;
  align-items: center;
  background: ${c.tab};
  border-bottom: 1px solid ${c.dark};
`;

const ViewTab = styled.div<{ $w: number; $kind?: "dark" | "on" }>`
  width: ${(p) => p.$w}px;
  height: 15px;
  padding: 0 4px;
  display: flex;
  align-items: center;
  gap: 6px;
  ${(p) => p.$kind === "dark" && css`background: #2f3744;`}
  ${(p) => p.$kind === "on" && css`background: ${c.dark}; font-weight: 700; color: #fff;`}
  button + button { margin-left: auto; }
`;

const TabName = styled.button`
  font-weight: inherit;
  color: inherit;
`;

const TabMenu = styled.button`
  margin: 0 2px 0 auto;
`;

const Canvas = styled.div`
  position: relative;
  min-height: 0;
  background: #fff;
  overflow: hidden;
  > svg { width: 100%; height: 100%; }
`;

const NavBar = styled.div`
  position: absolute;
  top: 0;
  right: 0;
  width: 25px;
  padding: 2px 0;
  display: grid;
  justify-items: center;
  align-content: space-between;
  height: 112px;
  background: #f0f0f0;
  border: 1px solid #cfd1d5;
  border-radius: 3px;
  color: #888;
`;

const NavBtn = styled.button`
  display: grid;
  justify-items: center;
  gap: 3px;
  color: inherit;
`;

const ViewBar = styled.div`
  grid-column: 1 / 3;
  display: flex;
  align-items: center;
  padding-left: 12px;
  background: #303845;
  border-top: 1px solid #4b5465;
`;

const ScaleBtn = styled.button`
  width: 46px;
  padding-left: 4px;
  text-align: left;
`;

const HTrack = styled.div`
  flex: 1;
  display: flex;
  align-items: center;
  justify-content: center;
  &::after { content: ""; width: 14px; height: 6px; border-radius: 3px; background: ${c.thumb}; }
`;

const Grip = styled.span`
  width: 14px;
`;

const VTrack = styled(Track)`
  padding: 3px 0;
`;

const VMid = styled.span`
  width: 6px;
  height: 13px;
  border-radius: 3px;
  background: ${c.thumb};
`;

/* ---------- drawing ---------- */
const rng = (seed: number) => () => {
  seed = (seed * 1664525 + 1013904223) % 4294967296;
  return seed / 4294967296;
};

/* scanned points scattered along a polyline */
const Cloud = ({ pts, t, n, cols, seed = 1 }: { pts: [number, number][]; t: number; n: number; cols: string[]; seed?: number }) => {
  const r = rng(seed * 7919);
  const d = cols.map(() => "");
  const lens = pts.slice(1).map((p, i) => Math.hypot(p[0] - pts[i][0], p[1] - pts[i][1]));
  const total = lens.reduce((a, b) => a + b, 0);
  for (let i = 0; i < n * total; i++) {
    let at = r() * total, k = 0;
    while (k < lens.length - 1 && at > lens[k]) at -= lens[k++];
    const u = at / lens[k];
    const x = pts[k][0] + (pts[k + 1][0] - pts[k][0]) * u;
    const y = pts[k][1] + (pts[k + 1][1] - pts[k][1]) * u + (r() - 0.5) * t;
    const w = 1 + r() * 1.5;
    d[Math.floor(r() * cols.length)] += `M${x.toFixed(1)} ${y.toFixed(1)}h${w.toFixed(1)}v1h-${w.toFixed(1)}z`;
  }
  return <>{d.map((q, i) => <path key={i} d={q} fill={cols[i]} />)}</>;
};

const Bubble = ({ x, label }: { x: number; label: string }) => (
  <g>
    <path d={`M${x} 873V147`} stroke="#6f6f6f" strokeDasharray="66 17 2 16.500" fill="none" />
    <circle cx={x} cy="895.500" r="22" fill="#fff" stroke="#4a4a4a" />
    <text x={x} y="902" fontSize="17" textAnchor="middle" fill="#333" fontFamily="Liberation Sans, Arial, sans-serif">{label}</text>
  </g>
);

const Pipe = ({ x, y, r }: { x: number; y: number; r: number }) => (
  <g fill="none" stroke="#6a6ad6" strokeWidth=".9">
    <circle cx={x} cy={y} r={r} fill="#dcdcf4" />
    <path d={`M${x - r - 3} ${y}h${2 * r + 6}M${x} ${y - r - 6}v${2 * r + 12}M${x - r * 0.7} ${y - r * 0.7}l${r * 1.4} ${r * 1.4}M${x + r * 0.7} ${y - r * 0.7}l${-r * 1.4} ${r * 1.4}`} strokeWidth=".6" />
    <path d={`M${x - r} ${y + 1}A${r} ${r} 0 0 1 ${x + r * 0.7} ${y - r * 0.7}`} stroke="#2c2c4a" strokeWidth="1.200" />
  </g>
);

const K = ["#1d1d1d", "#3c3a38", "#6b6866", "#8e8a86", "#20201c"];
const T = ["#2c2b26", "#5a574c", "#12120f", "#75725f", "#3b3a30", "#8f8c78"];
const O = ["#b9772e", "#8a5a26", "#3a2c20", "#77716c", "#c99246"];

const Sketch = () => (
  <svg viewBox="262 147 1376 864" preserveAspectRatio="xMinYMin slice" role="img" aria-label="Section M00-000-SN-OW1">
    <defs>
      <pattern id="hatch" width="77" height="11" x="262" y="477" patternUnits="userSpaceOnUse">
        <rect width="77" height="11" fill="#f0f0f0" />
        <path stroke="#2a2a2a" fill="none" d="M1 11L12 0M13 11L24 0M27 11l5-5M34 4l4-4M40 11L51 0M52 11L63 0M67 11l3-3M73 5l5-5" />
      </pattern>
      <pattern id="hatchLeft" width="77" height="11" x="262" y="559" patternUnits="userSpaceOnUse">
        <rect width="77" height="11" fill="#f0f0f0" />
        <path stroke="#2a2a2a" fill="none" d="M1 11L12 0M13 11L24 0M27 11l5-5M34 4l4-4M40 11L51 0M52 11L63 0M67 11l3-3M73 5l5-5" />
      </pattern>
      <pattern id="hatchFloor" width="77" height="11" x="402" y="602" patternUnits="userSpaceOnUse">
        <rect width="77" height="11" fill="#f0f0f0" />
        <path stroke="#2a2a2a" fill="none" d="M1 11L12 0M13 11L24 0M27 11l5-5M34 4l4-4M40 11L51 0M52 11L63 0M67 11l3-3M73 5l5-5" />
      </pattern>
      <pattern id="hatchWall" width="12" height="16" x="402" y="488" patternUnits="userSpaceOnUse">
        <rect width="12" height="16" fill="#f0f0f0" />
        <path stroke="#2a2a2a" fill="none" d="M0 14L12 2" />
      </pattern>
    </defs>

    <path d="M262 735h1376" stroke="#555" />
    <Bubble x={264.500} label="I" />
    <Bubble x={401.500} label="L" />
    <Bubble x={1562.500} label="T" />
    <path d="M408 559.500h1215" stroke="#7a7a7a" strokeDasharray="65 17 24 17" />
    <path d="M1597 476.500h25" stroke="#8a8a8a" />

    {/* ducts */}
    <g fill="#e8e8ea" stroke="#9a9aea">
      <path d="M1562.500 487.500h13.500v115h-13.500z" stroke="#444" />
      <path d="M506 537h58v28h-58z" />
      <path d="M564 537h5c6 0 10-8 16-14 8-8 16-12 30-12.500v28h-6c-5 0-9 7-14 12-8 9-14 14.500-31 14.500z" />
      <path d="M615.500 510.500H1189.500v28H615.500z" />
      <path d="M1189.500 510.500c14 0 22 5 32 13l6 6c3 3 4 3 9 3v28c-16 0-22-4-30-12-6-6-9-10-17-10z" />
      <path d="M1236.500 532.500H1576v28h-339.500z" />
      <path d="M1562.500 532.500h13.500v28h-13.500z" fill="#d0d0d6" />
      <path fill="none" d="M556 537v28M577 532l18 20M587 523l17 18M586 542l6-7M615 524.500h574M1202 542l19-18M1206 547l19-18M1211 534l5 5M1236 546.500h340" />
    </g>
    <g fill="none" stroke="#44446a" strokeWidth="1.200">
      <path d="M564 536.500h5c6 0 10-8 16-14 8-8 15-11 27-12.500" />
      <path d="M612 538.500h8M640 539h20M700 539h22M900 537.500h68M972 538.500h217M1189.500 510c14 0 22 5 32 13l6 6c3 3 4 3 12 3M1193 538.500c6 0 9 4 14 10 8 8 14 12 30 12" />
      <path d="M1240 532.500h60M1330 533h45M1420 533h140M1270 561h40M1350 561h90M1460 561h65" strokeWidth="1" stroke="#66669f" />
    </g>
    <path d="M509.500 537.500h15v27h-15z" fill="#6b6b6b" stroke="#333" />
    <Cloud pts={[[510, 551], [523, 551]]} t={26} n={22} cols={["#444", "#999", "#666"]} seed={3} />

    {/* walls */}
    <g stroke="#222">
      <path d="M262 559.500h140v10H262z" fill="url(#hatchLeft)" />
      <path d="M402 487h12v116h-12z" fill="url(#hatchWall)" />
      <path d="M255 476.500h1340v11H255z" fill="url(#hatch)" />
      <path d="M402 602.500h1193v11H402z" fill="url(#hatchFloor)" />
    </g>
    <path d="M414 487.500h1149M414 602.500h1149M413.500 488v114M262 487.500h140" stroke="#111" strokeWidth="1.300" fill="none" />
    <path d="M1563.500 488v44M1563.500 561v41" stroke="#333" strokeWidth="2.500" />

    {/* scanned trays */}
    <g fill="none" strokeLinejoin="round">
      <path d="M262 499h87l54 17h31l36-17h101M349 500l64 29h21l39-21h98" stroke="#3a383c" strokeWidth="4.500" />
      <path d="M262 499h87l54 17h31l36-17h90M349 500l64 29h21l39-21h60" stroke="#a9a7b6" strokeWidth="2" />
      <path d="M414 548l131 50" stroke="#3c3a34" strokeWidth="7" />
      <path d="M414 547l131 50" stroke="#a5a294" strokeWidth="3" />
      <path d="M321 515h24l32-4M321 525h30l26-4M321 540h56M321 548h56" stroke="#3a3a3a" strokeWidth="2.500" />
    </g>
    <Cloud pts={[[262, 496], [340, 496], [372, 499]]} t={6} n={4} cols={O} seed={4} />
    <Cloud pts={[[349, 500], [402, 518]]} t={6} n={1} cols={K} seed={5} />
    <Cloud pts={[[404, 514], [434, 513], [470, 496], [571, 499]]} t={4} n={1} cols={[...K, "#9a6a2c"]} seed={6} />
    <Cloud pts={[[413, 527], [434, 527], [473, 506], [571, 508]]} t={4} n={1} cols={[...K, "#8a8436"]} seed={7} />
    <Cloud pts={[[321, 515], [345, 513], [377, 511], [402, 515]]} t={5} n={2} cols={K} seed={8} />
    <Cloud pts={[[321, 525], [350, 524], [377, 521]]} t={4} n={2} cols={K} seed={9} />
    <Cloud pts={[[321, 540], [377, 540]]} t={5} n={2} cols={K} seed={10} />
    <Cloud pts={[[321, 548], [377, 548]]} t={4} n={2} cols={K} seed={11} />
    <Cloud pts={[[379, 546], [401, 544]]} t={5} n={2} cols={K} seed={12} />
    <Cloud pts={[[264, 547], [284, 547]]} t={8} n={4} cols={K} seed={13} />
    <path d="M262 555.500h73" stroke="#45434a" strokeWidth="7" />
    <path d="M335 556h66" stroke="#b5b5cf" strokeWidth="6" />
    <Cloud pts={[[262, 555], [335, 555]]} t={7} n={4} cols={K} seed={14} />
    <Cloud pts={[[335, 555], [395, 557]]} t={6} n={2} cols={K} seed={15} />
    {[272, 336, 476, 534].map((x, i) => (
      <Cloud key={x} pts={[[x - 2, i < 2 ? 498 : 501], [x + 2, i < 2 ? 498 : 501]]} t={i < 2 ? 20 : 28} n={16} cols={["#8d8d8d", "#666", "#aaa"]} seed={20 + i} />
    ))}
    <Cloud pts={[[440, 557], [545, 597], [570, 599]]} t={6} n={3} cols={T} seed={30} />
    <path d="M545 595.500h435v6.500H552z" fill="#3b3930" />
    <Cloud pts={[[550, 598.500], [930, 598.500]]} t={5} n={3} cols={T} seed={31} />
    <path d="M930 596h142v6H930z" fill="#8b8875" />
    <Cloud pts={[[930, 598.500], [1071, 598.500]]} t={5} n={2} cols={T} seed={32} />
    <path d="M545 595.500h527" stroke="#22211c" />
    <path d="M1071 597.500h16M1071 600.500h16" stroke="#9a9ad8" />
    <path d="M1087 595h45v6h-45z" fill="#4b4638" />
    <Cloud pts={[[1087, 598], [1131, 597.500]]} t={6} n={5} cols={T} seed={33} />

    {/* pipes cut by the view */}
    <path d="M812 559.500h80" stroke="#6a6aa6" />
    {[[818, 559, 7], [837, 559, 6], [856, 559, 8], [883, 559, 8], [907, 545, 7], [922, 544, 5], [894, 585, 6], [905, 585, 5]].map(([x, y, r]) => (
      <Pipe key={x} x={x} y={y} r={r} />
    ))}
    {[[800, 566, 3], [807, 582, 2], [814, 582, 2], [821, 582, 2], [829, 582, 2], [836, 582, 2], [843, 582, 2], [918, 584, 2], [924, 584, 2]].map(([x, y, r]) => (
      <g key={x} stroke="#6d6dd6" strokeWidth=".7">
        <circle cx={x} cy={y} r={r} fill="#9a9ae6" />
        <path d={`M${x - r - 1} ${y}h${2 * r + 2}M${x} ${y - r - 2}v${2 * r + 4}`} />
      </g>
    ))}
    <path d="M806 580.500h40" stroke="#33334a" strokeDasharray="5 2" />
    <path d="M799 572h2.500v2.500H799zM854 543.500h2.500v2.500H854zM926 488h3v1.500h-3zM1342 488h2v2h-2zM1160 488h2v2h-2z" fill="#111" />

    {/* section marker */}
    <path d="M1232 131V873" stroke="#8c8c8c" strokeWidth="1.500" strokeDasharray="16 33 49 34" />
    <path d="M1219 895.500l13-22.500v45z" fill="#0c38b8" />
    <path d="M1232 873v45" stroke="#333" />
  </svg>
);

/* ---------- project browser ---------- */
const BrowserTabs = styled.div`
  flex: none;
  height: 17px;
  display: flex;
  align-items: center;
  background: ${c.darker};
`;

const BrowserTab = styled.button<{ $on?: boolean }>`
  width: 18px;
  height: 17px;
  display: grid;
  place-items: center;
  background: ${(p) => (p.$on ? c.panel : "none")};
`;

const SearchBox = styled.label`
  flex: none;
  height: 17px;
  margin: 7px 5px 6px 7px;
  padding: 0 6px;
  display: flex;
  align-items: center;
  gap: 6px;
  background: ${c.well};
  color: #aeb5c0;
  input { flex: 1; min-width: 0; color: ${c.text}; }
  input::placeholder { color: #949ca9; opacity: 1; }
`;

const TreeList = styled.ul`
  list-style: none;
  margin: 0;
  padding: 0;
`;

const TreeItem = styled.li<{ $lv: number; $on?: boolean }>`
  height: 15px;
  display: flex;
  align-items: center;
  padding-left: ${(p) => 5 + p.$lv * 12}px;
  background: repeating-linear-gradient(90deg, transparent 0 8px, #475162 8px 9px, transparent 9px 12px) 0 0 / ${(p) => p.$lv * 12}px 100% no-repeat
    ${(p) => (p.$on ? c.well : "transparent")};
  font-weight: ${(p) => (p.$on ? 700 : 400)};
  color: ${(p) => (p.$on ? "#fff" : c.text)};
`;

const Expander = styled.button<{ $hidden?: boolean }>`
  width: 7px;
  height: 7px;
  margin-right: 5px;
  visibility: ${(p) => (p.$hidden ? "hidden" : "visible")};
`;

const NodeIcon = styled.span`
  width: 16px;
`;

const fittings = `94511 Union - XX'RA'XX_000|94511 Union - XX'RA'XX_010|94512 Transition - XX'RA'AL_000|94512 Transition - XX'RA'AL_010|94512 Transition - XX'RA'LH_000|94512 Transition - XX'RA'LH_010|94513 Elbow - XX'RA'FL+IS_000|94513 Elbow - XX'RA'FL+IS_010|94513 Elbow - XX'RA'FL+OS_000|94513 Elbow - XX'RA'FL+OS_010|94513 Elbow - XX'RA'FL_000|94513 Elbow - XX'RA'FL_010|94513 Elbow - XX'RA'MR+IS_000|94513 Elbow - XX'RA'MR+IS_010|94513 Elbow - XX'RA'MR+OS_000|94513 Elbow - XX'RA'MR+OS_010|94513 Elbow - XX'RA'MR_000|94513 Elbow - XX'RA'MR_010|94515 Tee - XX'RA'FL_000|94515 Tee - XX'RA'FL_010|94515 Tee - XX'RA'MR_000|94515 Tee - XX'RA'MR_010|94521 Union - XX'RA'XX_010|94522 Transition - XX'RA'AL_010|94522 Transition - XX'RA'LH_010|94523 Elbow - XX'RA'FL+IS_010|94523 Elbow - XX'RA'FL+OS_010|94523 Elbow - XX'RA'FL_010|94523 Elbow - XX'RA'FL_011|94523 Elbow - XX'RA'MR+IS_010|94523 Elbow - XX'RA'MR+OS_010`.split("|");

/* level, expander, icon, label */
const tree: [number, string, string, string][] = [
  [0, "-", "views", "Views (P00-000 Discipline)"],
  [1, "-", "", "Architectural"], [2, "+", "", "P10-AAA"], [2, "+", "", "P20-TGA"],
  [1, "-", "", "Coordination"], [2, "-", "", "M00-000"], [3, "-", "", "Floor Plans (M00-000-GR)"],
  [4, "", "crop", "UG3"], [4, "", "crop", "UG2"], [3, "+", "", "Elevations (M00-000-AN)"], [3, "-", "", "Sections (M00-000-SN)"],
  [4, "", "crop", "M00-000-SN-NS1"], [4, "", "crop", "M00-000-SN-NS2"], [4, "", "crop", "M00-000-SN-OW1"], [4, "", "crop", "M00-000-SN-OW2"],
  [2, "-", "", "X00-BIM"], [3, "-", "", "3D Views (X00-BIM-3D)"], [4, "", "crop", "Navis"], [1, "+", "", "Mechanical"],
  [0, "", "legend", "Legends"], [0, "+", "sched", "Schedules/Quantities (P00-000 Subdiscipline)"], [0, "+", "sheetp", "Sheets (P00-000 Subdiscipline)"],
  [0, "-", "fam", "Families"], [1, "+", "", "Annotation Symbols"], [1, "-", "", "Cable Tray Fittings"],
  ...fittings.map((f): [number, string, string, string] => [2, "+", "", "DIN 400 " + f]),
];

/* ---------- status bar and taskbar ---------- */
const Status = styled.footer`
  display: flex;
  align-items: center;
  padding: 0 30px 0 2px;
  background: ${c.panel};
  border-top: 1px solid #4b5465;
`;

const StatusRight = styled.div`
  margin-left: auto;
  display: flex;
  align-items: center;
`;

const Tick = styled.label`
  display: flex;
  align-items: center;
  gap: 1px;
  margin-left: 3px;
  margin-right: 7px;
`;

const Taskbar = styled.div`
  display: grid;
  grid-template-columns: 1fr auto 1fr;
  align-items: center;
  background: linear-gradient(90deg, #1c2230 0, #1c2431 18%, #14264f 21%, #15225a 33%, #161f60 34%, #1f1c52 37%, #14264a 42%, #181f58 48%, #191f56 60%, #151c56 66%, #1b2131 71%, #1a202c 100%);
`;

const Apps = styled.div`
  grid-column: 2;
  display: flex;
  align-items: center;
  padding-left: 8px;
`;

const TaskSearch = styled.label`
  width: 165px;
  height: 24px;
  margin: 0 2px 0 10px;
  padding: 0 8px;
  display: flex;
  align-items: center;
  gap: 8px;
  border-radius: 12px;
  background: #343c6a;
  border: 1px solid #454d7c;
  input { flex: 1; min-width: 0; font-size: 10px; }
  input::placeholder { color: #d6daea; opacity: 1; }
`;

const AppBtn = styled.button<{ $on?: boolean }>`
  width: 33px;
  height: 34px;
  padding-top: 6px;
  display: grid;
  grid-template-rows: 21px 3px;
  justify-items: center;
  align-items: center;
  align-content: start;
  row-gap: 1px;
  background: ${(p) => (p.$on ? "linear-gradient(#2c3158, #2c3158) center / 30px 32px no-repeat" : "none")};
  &::after {
    content: "";
    width: ${(p) => (p.$on ? 12 : 5)}px;
    height: 3px;
    border-radius: 2px;
    background: ${(p) => (p.$on ? "#6cc4f2" : "#9aa0b0")};
  }
`;

const Tray = styled.div`
  justify-self: end;
  display: flex;
  align-items: center;
  padding-right: 13px;
  gap: 4px;
`;

const Clock = styled.time`
  width: 56px;
  margin-right: 2px;
  text-align: right;
`;

const Lang = styled.span`
  padding: 0 9px;
`;

const Gap = styled.span<{ $w: number }>`
  flex: none;
  width: ${(p) => p.$w}px;
`;

const ribbonTabs = ["Architecture", "Structure", "Steel", "Precast", "Systems", "Insert", "Annotate", "Analyze", "Massing & Site", "Collaborate", "View", "Manage", "Add-Ins", "ReCap Mesh"];

export default function App() {
  return (
    <Shell>
      <GlobalStyle />
      <TitleBar>
        <Bar>
          {quick.map(([n, w, on], i) =>
            n === "|" ? <Rule key={i} /> : (
              <ToolBtn key={i} $w={w} $on={on} aria-label={n}>
                <Icon n={n} {...(n === "caret" ? { w: 4, h: 3 } : {})} />
              </ToolBtn>
            )
          )}
        </Bar>
        <TitleText>Autodesk Revit 2026.3 - BNI-24003-P20-TGA.rvt - Section: M00-000-SN-OW1</TitleText>
        <Bar>
          <ToolBtn $w={12} aria-label="collapse"><Icon n="caretleft" w={3} h={5} /></ToolBtn>
          <ToolBtn $w={16} aria-label="find"><Icon n="binoc" w={10} h={10} /></ToolBtn>
          <ToolBtn $w={19} aria-label="account"><Icon n="user" w={11} h={11} /></ToolBtn>
          <span>anastasiia.fesh...</span>
          <ToolBtn $w={5} aria-label="account menu"><Icon n="caret" w={4} h={3} /></ToolBtn>
          <ToolBtn $w={22} aria-label="store"><Icon n="cart" w={11} h={10} /></ToolBtn>
          <Rule />
          <ToolBtn $w={20} aria-label="help"><Icon n="help" /></ToolBtn>
          <ToolBtn $w={8} aria-label="help menu"><Icon n="caret" w={4} h={3} /></ToolBtn>
          <Gap $w={40} />
          <ToolBtn $w={19} aria-label="minimize"><Icon n="min" /></ToolBtn>
          <ToolBtn $w={19} aria-label="restore"><Icon n="restore" /></ToolBtn>
          <ToolBtn $w={18} aria-label="close"><Icon n="close" /></ToolBtn>
        </Bar>
      </TitleBar>

      <TabRow>
        <RibbonTab $kind="file">File</RibbonTab>
        {ribbonTabs.map((t) => <RibbonTab key={t}>{t}</RibbonTab>)}
        <RibbonTab $kind="on">Modify</RibbonTab>
        <Gap $w={12} />
        <ToolBtn $w={16} $h={15} aria-label="ribbon display"><Icon n="camera" w={10} h={7} /></ToolBtn>
        <ToolBtn $w={8} $h={15} aria-label="ribbon menu"><Icon n="caret" w={4} h={3} /></ToolBtn>
      </TabRow>

      <Ribbon>
        <Panel $w={44}>
          <PanelBody><BigBtn $w={34} $on><Icon n="cursor" w={15} h={24} /><span>Modify</span></BigBtn></PanelBody>
          <PanelName>Select <Icon n="caret" w={6} h={4} /></PanelName>
        </Panel>
        <Panel $w={49}>
          <PanelBody><Icons names={["blocks", "propsheet"]} cols={1} w={28} h={27} on="propsheet" /></PanelBody>
          <PanelName>Properties</PanelName>
        </Panel>
        <Panel $w={60}>
          <PanelBody>
            <BigBtn $w={26} $off><Icon n="paste" w={20} h={23} /><span>Paste</span><Icon n="caret" w={4} h={3} color={W} /></BigBtn>
            <Icons names={["cutter", "copyg", "match"]} cols={1} w={20} h={18} />
          </PanelBody>
          <PanelName>Clipboard</PanelName>
        </Panel>
        <Panel $w={106}>
          <PanelBody $gap={0}>
            <Stack>
              {[["notch", "Notch"], ["cutgeo", "Cut"], ["joingeo", "Join"]].map(([n, t]) => (
                <TextBtn key={n}><Icon n={n} /><span>{t}</span><Icon n="caret" w={4} h={3} /></TextBtn>
              ))}
            </Stack>
            <Icons names={["cope", "split", "wallj", "paint+caret", "demo", "hammer"]} cols={2} w={20} h={18} />
          </PanelBody>
          <PanelName>Geometry</PanelName>
        </Panel>
        <Panel $w={43}>
          <PanelBody><BigBtn $w={38} $on><Icon n="activate" w={24} h={24} /><span>Activate</span></BigBtn></PanelBody>
          <PanelName>Controls</PanelName>
        </Panel>
        <Panel $w={179}>
          <PanelBody>
            <Icons names={["align", "offset", "mirrorpick", "mirrordraw", "move", "copy", "rotate", "trim"]} cols={4} w={29} h={27} />
            <Icons names={["splitel", "splitgap", "unpin", "array", "scale", "pin", "trims", "trimm", "del"]} cols={3} w={19} h={18} />
          </PanelBody>
          <PanelName>Modify</PanelName>
        </Panel>
        <Panel $w={49}>
          <PanelBody><Icons names={["bulbg+caret", "cubeg", "brushg+caret", "linew", "diamondg", ""]} cols={2} w={22} h={18} /></PanelBody>
          <PanelName>View</PanelName>
        </Panel>
        <Panel $w={42}>
          <PanelBody><Icons names={["measure+caret", "dimbig+caret"]} cols={1} w={34} h={27} /></PanelBody>
          <PanelName>Measure</PanelName>
        </Panel>
        <Panel $w={61}>
          <PanelBody><Icons names={["family", "group", "sheets", "assembly"]} cols={2} w={27} h={27} /></PanelBody>
          <PanelName>Create</PanelName>
        </Panel>
      </Ribbon>
      <div />

      <Dock>
        <Side>
          <SideHead>Properties<ToolBtn $w={11} $h={14} aria-label="close properties"><Icon n="close" /></ToolBtn></SideHead>
          <TypePicker>
            <Thumb><Icon n="typesec" /></Thumb>
            <span>Section<br />M00-000-SN</span>
            <Icon n="caret" w={6} h={3} color="#8f98a6" />
          </TypePicker>
          <Instance>
            <Combo>
              <select aria-label="Instance"><option>Section: M00-000-SN-OW1</option></select>
              <Icon n="chev" w={7} h={5} color="#8f98a6" />
            </Combo>
            <EditType><Icon n="grid" />Edit Type</EditType>
          </Instance>
          <Scroller>
            <Clip>
              <PropTable>
                <colgroup><col width="121" /><col /></colgroup>
                <tbody>
                  {props.map((p, i) =>
                    typeof p === "string" ? (
                      <GroupRow key={i}><th colSpan={2}><div>{p}<Icon n="collapse" /></div></th></GroupRow>
                    ) : <PropLine key={i} p={p} />
                  )}
                </tbody>
              </PropTable>
            </Clip>
            <Track><Icon n="chevup" w={7} h={5} /><Rail $from={0} $len={92} /><Icon n="chev" w={7} h={5} /></Track>
          </Scroller>
          <SideFoot>
            <ToolBtn $w={16} $h={15} $on aria-label="group"><Icon n="sortcat" /></ToolBtn>
            <ToolBtn $w={18} aria-label="sort ascending"><Icon n="sortaz" w={11} h={12} /></ToolBtn>
            <ToolBtn $w={18} aria-label="sort descending"><Icon n="sortza" w={11} h={12} /></ToolBtn>
            <Apply>Apply</Apply>
          </SideFoot>
        </Side>

        <Centre>
          <ViewTabs>
            <ViewTab $w={143} $kind="dark"><Icon n="sheet" w={11} h={10} /><TabName>000 - P20-TGA-PL-000-Z00</TabName><button aria-label="close tab"><Icon n="close" w={7} h={7} /></button></ViewTab>
            <ViewTab $w={96}><Icon n="houseg" w={11} h={10} /><TabName>Navis</TabName></ViewTab>
            <ViewTab $w={97}><Icon n="plan" w={11} h={11} /><TabName>UG2</TabName></ViewTab>
            <ViewTab $w={117} $kind="on"><Icon n="tabsec" w={10} h={11} /><TabName>M00-000-SN-OW1</TabName><button aria-label="close tab"><Icon n="close" w={7} h={7} /></button></ViewTab>
            <TabMenu aria-label="tab list"><Icon n="arrowsort" w={7} h={6} /></TabMenu>
          </ViewTabs>
          <Canvas>
            <Sketch />
            <NavBar>
              <Icon n="dot" w={5} h={5} />
              <NavBtn aria-label="wheel"><Icon n="wheel" /><Icon n="caret" w={4} h={3} /></NavBtn>
              <NavBtn aria-label="zoom region"><Icon n="zoomr" /><Icon n="caret" w={4} h={3} /></NavBtn>
              <NavBtn aria-label="plane"><Icon n="plane" /><Icon n="caret" w={4} h={3} /></NavBtn>
              <Icon n="dot" w={5} h={5} />
            </NavBar>
          </Canvas>
          <VTrack><Icon n="chevup" w={7} h={5} /><VMid /><Icon n="chev" w={7} h={5} /></VTrack>
          <ViewBar>
            <ScaleBtn>1 : 100</ScaleBtn>
            {["detail", "style", "sun", "shadow", "cropv", "cropb", "glasses", "bulb", "props", "analytic", "building", "constr"].map((n) => (
              <ToolBtn key={n} $w={19} $h={14} aria-label={n}><Icon n={n} h={11} /></ToolBtn>
            ))}
            <ToolBtn $w={12} $h={14} aria-label="scroll left"><Icon n="chevleft" w={5} h={7} /></ToolBtn>
            <HTrack />
            <ToolBtn $w={10} $h={14} aria-label="scroll right"><Icon n="chevright" w={5} h={7} /></ToolBtn>
            <Grip />
          </ViewBar>
        </Centre>

        <Side>
          <SideHead>Project Browser - BNI-24003-P20-TGA.rvt<ToolBtn $w={9} $h={14} aria-label="close browser"><Icon n="close" w={7} h={7} /></ToolBtn></SideHead>
          <BrowserTabs>
            {["house", "views", "legend", "sched", "sheetp", "fam", "grp", "link"].map((n, i) => (
              <BrowserTab key={n} $on={i === 0} aria-label={n}><Icon n={n} w={12} h={12} /></BrowserTab>
            ))}
          </BrowserTabs>
          <SearchBox><Icon n="search" /><input placeholder="Search" aria-label="Search the browser" /></SearchBox>
          <Scroller>
            <Clip>
              <TreeList>
                {tree.map(([lv, ex, ic, label], i) => (
                  <TreeItem key={i} $lv={lv} $on={label === "M00-000-SN-OW1"}>
                    <Expander $hidden={!ex} aria-label={"toggle " + label}><Icon n={ex === "+" ? "plus" : "minus"} /></Expander>
                    {ic && <NodeIcon><Icon n={ic} w={12} h={12} /></NodeIcon>}
                    {label}
                  </TreeItem>
                ))}
              </TreeList>
            </Clip>
            <Track><Icon n="chevup" w={7} h={5} /><Rail $from={0} $len={34} /><Icon n="chev" w={7} h={5} /></Track>
          </Scroller>
        </Side>
      </Dock>

      <Status>
        2D Mode
        <StatusRight>
          <Icon n="workset" w={12} h={13} />
          <Gap $w={6} />
          <Combo $w={155}><select aria-label="Workset"><option>440 Conduits (Not Editable)</option></select><Icon n="chev" w={6} h={4} color="#8f98a6" /></Combo>
          <Gap $w={4} />
          <Icon n="editreq" w={10} h={12} />:0
          <Gap $w={16} /><Icon n="cube" w={11} h={12} /><Gap $w={14} /><Icon n="listw" /><Gap $w={7} /><Icon n="listg" />
          <Gap $w={4} />
          <Combo $w={155}><select aria-label="Design option"><option>Main Model</option></select><Icon n="chev" w={6} h={4} color="#8f98a6" /></Combo>
          <Tick><CheckCell $w={8}><Check $s={7} defaultChecked /><CheckMark s={5} /></CheckCell>Exclude Options</Tick>
          <Tick><Check $s={7} />Editable Only</Tick>
          {["sellink", "selund", "selpin", "selface", "seldrag", "spin", "filter"].map((n) => (
            <ToolBtn key={n} $w={18} aria-label={n}><Icon n={n} w={13} h={13} /></ToolBtn>
          ))}
          :0
        </StatusRight>
      </Status>

      <Taskbar>
        <Apps>
          <ToolBtn $w={18} $h={34} aria-label="Start"><Icon n="win" /></ToolBtn>
          <TaskSearch><Icon n="search" color="#e6e9f5" /><input placeholder="Search" aria-label="Search the desktop" /></TaskSearch>
          {["folder", "edge", "teams", "outlook", "telegram", "rvt"].map((n) => (
            <AppBtn key={n} $on={n === "edge"} aria-label={n}><Icon n={n} /></AppBtn>
          ))}
        </Apps>
        <Tray>
          <Icon n="chevup" color="#fff" />
          <Gap $w={5} />
          <Icon n="cloud" />
          <Lang>УКР</Lang>
          <Icon n="monitor" /><Icon n="sound" /><Icon n="battery" />
          <Clock>13:50<br />23/10/2025</Clock>
          <Icon n="bell" />
        </Tray>
      </Taskbar>
    </Shell>
  );
}
